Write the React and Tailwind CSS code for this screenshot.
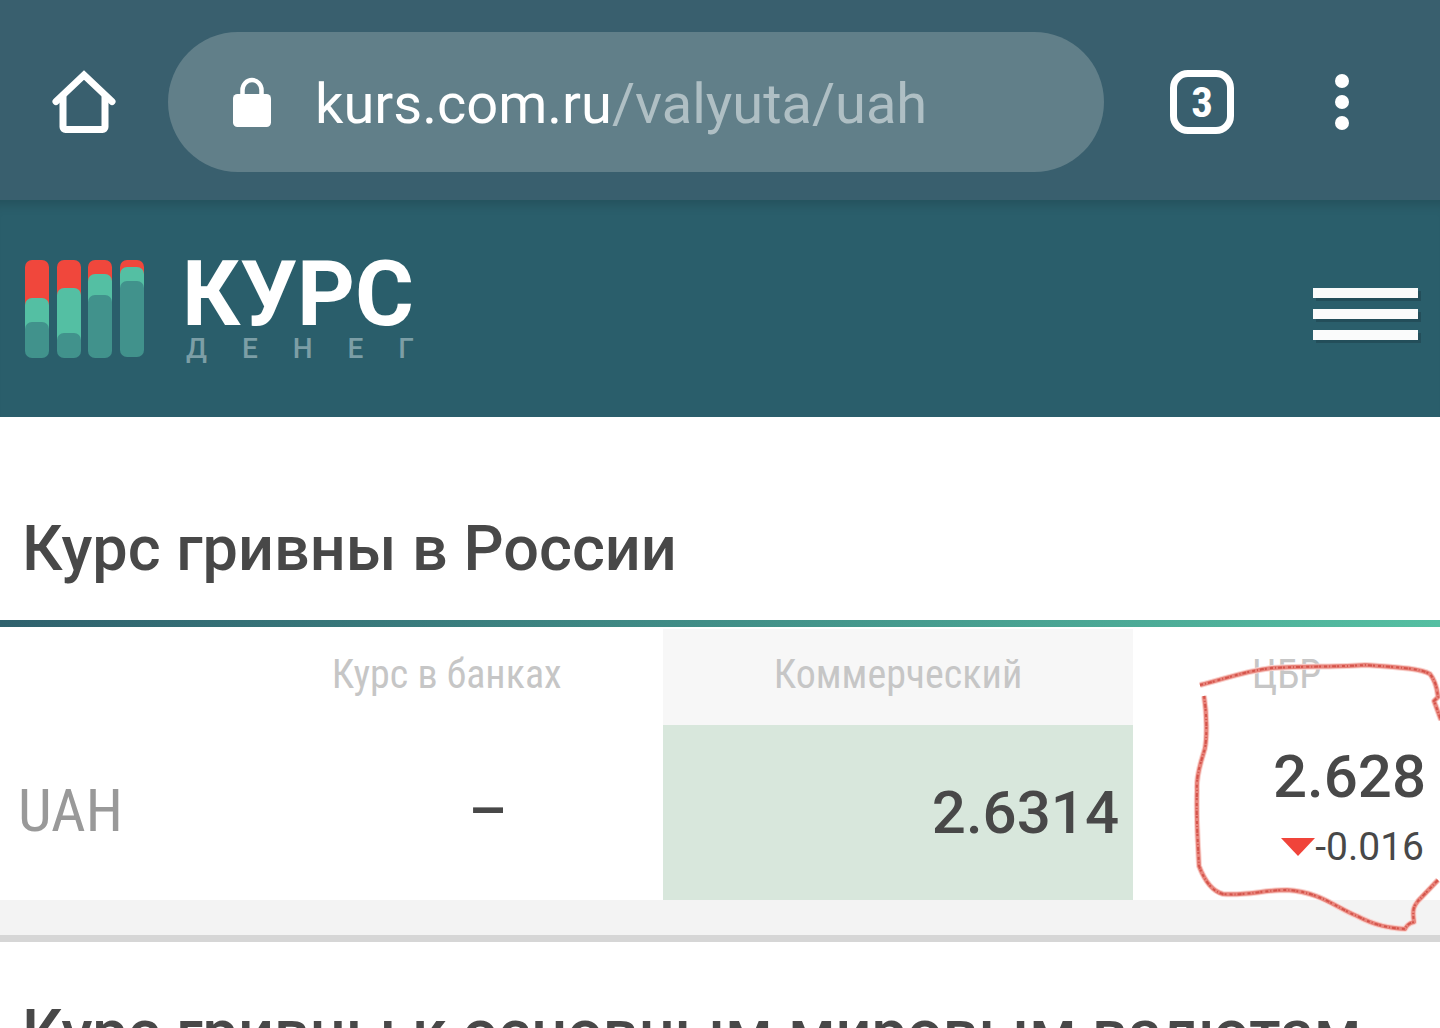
const BARS = [
  { x: 0, mid: 38, low: 62, end: 98 },
  { x: 32, mid: 28, low: 73, end: 98 },
  { x: 63, mid: 14, low: 35, end: 98 },
  { x: 95, mid: 7, low: 21, end: 97 },
]

const HEAD = "font-['Roboto_Condensed',Roboto,sans-serif] text-[40px] leading-[44px] font-normal text-[#c6c6c6] pt-6 pb-7"
const VALUE = 'block text-[60px] leading-[72px] font-medium text-[#484848]'
const TITLE = 'pl-[22px] text-[63px] leading-[72px] font-medium text-[#484848]'

function HomeIcon() {
  return (
    <svg viewBox="0 0 64 64" className="w-16 h-16" fill="none" stroke="#fff" strokeWidth="7" strokeLinecap="round">
      <path d="M4 31.500 32 5l28 26.500" />
      <path d="M11 27v30a2.500 2.500 0 0 0 2.500 2.500h37A2.500 2.500 0 0 0 53 57V27" />
    </svg>
  )
}

function LockIcon() {
  return (
    <svg viewBox="0 0 38 50" className="w-[38px] h-[50px]">
      <path d="M9.500 19v-6a9.500 10 0 0 1 19 0V19" fill="none" stroke="#fff" strokeWidth="4.500" />
      <rect y="17" width="38" height="33" rx="4.500" fill="#fff" />
    </svg>
  )
}

function BrowserBar() {
  return (
    <div className="flex items-center bg-[#395f6e] h-[200px] pt-1 pl-[52px] pr-[91px]">
      <button type="button" aria-label="Домой" className="shrink-0">
        <HomeIcon />
      </button>
      <div className="flex flex-1 items-center h-[140px] ml-[52px] rounded-full bg-[#617f89] pl-[65px] text-[56px] leading-[68px] whitespace-nowrap">
        <LockIcon />
        <span className="ml-11 mt-1 text-white">kurs.com.ru</span>
        <span className="mt-1 text-[#afbfc4]">/valyuta/uah</span>
      </div>
      <button type="button" aria-label="Вкладки" className="shrink-0 flex items-center justify-center w-16 h-16 ml-[66px] rounded-[18px] border-[7px] border-white text-white font-['Roboto_Condensed',Roboto,sans-serif] font-bold text-[43px] leading-none">
        3
      </button>
      <button type="button" aria-label="Меню браузера" className="shrink-0 flex flex-col gap-[7px] ml-[101px]">
        <span className="w-3.5 h-3.5 rounded-full bg-white" />
        <span className="w-3.5 h-3.5 rounded-full bg-white" />
        <span className="w-3.5 h-3.5 rounded-full bg-white" />
      </button>
    </div>
  )
}

function Logo() {
  return (
    <a href="/" className="flex items-start">
      <svg viewBox="0 0 119 98" className="w-[119px] h-[98px]">
        {BARS.map(b => (
          <g key={b.x}>
            <rect x={b.x} y="0" width="24" height={b.mid + 14} rx="7" fill="#f0473c" />
            <rect x={b.x} y={b.mid} width="24" height={b.low - b.mid + 14} rx="7" fill="#54bfa3" />
            <rect x={b.x} y={b.low} width="24" height={b.end - b.low} rx="7" fill="#41928c" />
          </g>
        ))}
      </svg>
      <span className="flex flex-col ml-[38px]">
        <span className="text-[90px] leading-[70px] font-bold text-white">КУРС</span>
        <span className="flex justify-between mt-[5px] ml-1 text-[28px] leading-[28px] font-medium text-[#7c9ea6]">
          {'ДЕНЕГ'.split('').map((c, i) => <span key={i}>{c}</span>)}
        </span>
      </span>
    </a>
  )
}

function SiteHeader() {
  return (
    <header className="flex items-start justify-between h-[217px] pt-[60px] pl-[25px] pr-[22px] bg-[#2a5e6b] shadow-[inset_0_14px_12px_-10px_rgba(0,0,0,.15)]">
      <Logo />
      <button type="button" aria-label="Меню" className="flex flex-col gap-[11px] mt-7">
        <span className="w-[105px] h-2.5 bg-[#fafbfb] shadow-[3px_3px_0_#234e5a]" />
        <span className="w-[105px] h-2.5 bg-[#fafbfb] shadow-[3px_3px_0_#234e5a]" />
        <span className="w-[105px] h-2.5 bg-[#fafbfb] shadow-[3px_3px_0_#234e5a]" />
      </button>
    </header>
  )
}

const SCRIBBLE = 'M1200 685C1225 679 1245 671 1272 668C1310 666 1338 667 1365 665C1393 667 1420 668 1430 674C1437 683 1437 691 1438 697L1434 701L1441 720M1204 696C1207 715 1207 737 1205 748C1202 760 1196 773 1197 790C1196 820 1198 843 1199 866C1204 879 1211 891 1223 894C1245 896 1265 890 1287 890C1320 892 1335 907 1357 916C1376 926 1390 928 1405 929C1408 923 1411 923 1414 922C1412 909 1414 906 1418 901L1438 880'

// hand drawn circle over the central bank rate, in three layers for a crayon edge
function Marker() {
  return (
    <svg viewBox="1180 650 260 290" className="absolute right-0 top-[30px] w-[260px] h-[290px] pointer-events-none" fill="none" strokeLinejoin="round">
      <path d={SCRIBBLE} stroke="#f9d5d1" strokeWidth="6" />
      <path d={SCRIBBLE} stroke="#e8857c" strokeWidth="4" />
      <path d={SCRIBBLE} stroke="#d4544b" strokeWidth="2" strokeDasharray="3 2 1 2 4 1 2 3" />
    </svg>
  )
}

function Rates() {
  return (
    <section className="relative">
      <div className="h-[7px] bg-linear-to-r from-[#2f616d] to-[#55bfa2]" />
      <table className="w-full mt-0.5 table-fixed border-collapse">
        <thead>
          <tr className="h-24">
            <td className="w-[16%]" />
            <th scope="col" className={HEAD}>Курс в банках</th>
            <th scope="col" className={`w-[470px] bg-[#f7f7f7] ${HEAD}`}>Коммерческий</th>
            <th scope="col" className={`w-[307px] ${HEAD}`}>ЦБР</th>
          </tr>
        </thead>
        <tbody>
          <tr className="h-[175px]">
            <th scope="row" className="pl-[18px] pb-1 text-left font-normal font-['Roboto_Condensed',Roboto,sans-serif] text-[60px] leading-[72px] text-[#999]">UAH</th>
            <td className="pl-[82px] pb-1 text-center"><span className={VALUE}>–</span></td>
            <td className="pr-3.5 text-right bg-[#d8e7dc]"><span className={VALUE}>2.6314</span></td>
            <td className="pr-3.5 pb-3 text-right">
              <span className={VALUE}>2.628</span>
              <span className="flex items-center justify-end text-[39px] leading-[52px] mt-2 pr-0.5 text-[#484848]">
                <svg viewBox="0 0 34 18" className="w-[34px] h-[18px]"><path d="M0 0h34L17 18z" fill="#f0443a" /></svg>
                -0.016
              </span>
            </td>
          </tr>
        </tbody>
      </table>
      <div className="h-[42px] bg-[#f3f3f3] border-b-[7px] border-[#d6d6d6]" />
      <Marker />
    </section>
  )
}

export default function App() {
  return (
    <div className="h-screen overflow-hidden bg-white font-[Roboto,'Liberation_Sans',sans-serif]">
      <BrowserBar />
      <SiteHeader />
      <main>
        <h1 className={`pt-24 pb-[35px] ${TITLE}`}>Курс гривны в России</h1>
        <Rates />
        <h2 className={`pt-[55px] whitespace-nowrap ${TITLE}`}>Курс гривны к основным мировым валютам</h2>
      </main>
    </div>
  )
}
